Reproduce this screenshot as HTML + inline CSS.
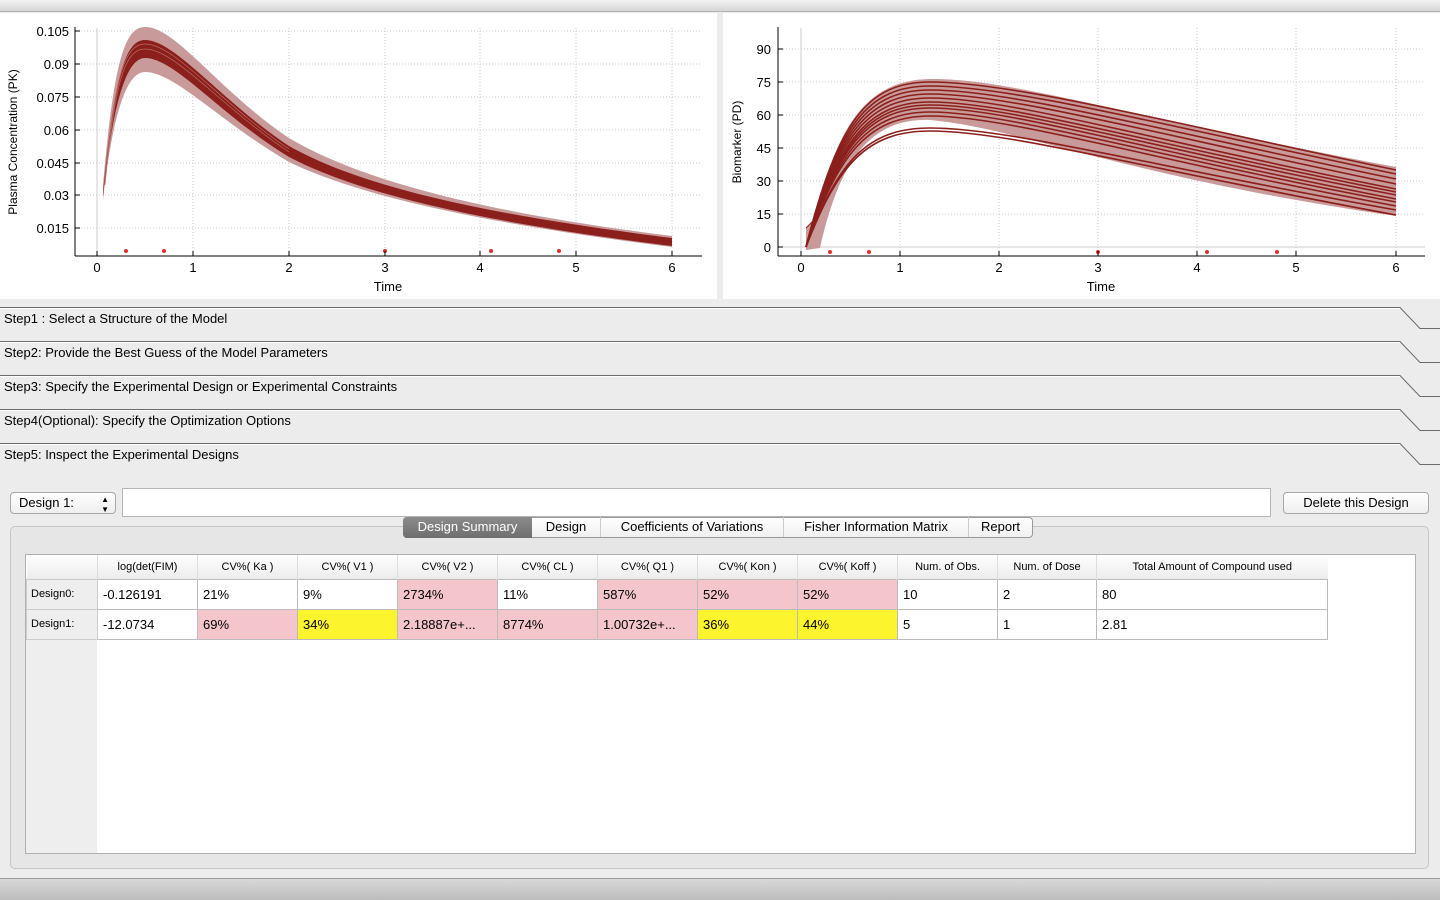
<!DOCTYPE html>
<html><head><meta charset="utf-8"><style>
*{margin:0;padding:0;box-sizing:border-box}
body{width:1440px;height:900px;overflow:hidden;background:#ececec;font-family:"Liberation Sans",sans-serif;position:relative;color:#000}
.a{position:absolute}
.step{position:absolute;left:4px;font-size:13px}
table{border-collapse:collapse;font-size:13px}
td{border:1px solid #bbb;height:30px;padding-left:5px;vertical-align:middle}
th{font-weight:normal;font-size:11px;height:24px;border-left:1px solid #ddd;background:linear-gradient(#fff,#ececec)}
.rh{background:#eee;font-size:11px;padding-left:4px;border-color:#ccc}
.p{background:#f4c6cc}.y{background:#fcf42c}
.tab{position:absolute;top:517px;height:20px;font-size:13px;line-height:20px;text-align:center;border-left:1px solid #ccc}
</style></head><body>
<div class="a" style="left:0;top:0;width:1440px;height:12px;background:linear-gradient(#f2f2f2,#d6d6d6);border-bottom:1px solid #b0b0b0"></div>
<div class="a" style="left:0;top:13px;width:717px;height:286px;background:#fff"></div>
<div class="a" style="left:723px;top:13px;width:717px;height:286px;background:#fff"></div>
<svg class="a" style="left:0;top:0" width="1440" height="300" font-family="Liberation Sans, sans-serif">
<g stroke="#c8c8c8" stroke-dasharray="1,2" stroke-width="1">
<line x1="78" x2="702" y1="31" y2="31"/><line x1="78" x2="702" y1="64" y2="64"/><line x1="78" x2="702" y1="97" y2="97"/><line x1="78" x2="702" y1="130" y2="130"/><line x1="78" x2="702" y1="163" y2="163"/><line x1="78" x2="702" y1="195" y2="195"/><line x1="78" x2="702" y1="228" y2="228"/>
<line x1="193" x2="193" y1="28" y2="256"/><line x1="289" x2="289" y1="28" y2="256"/><line x1="385" x2="385" y1="28" y2="256"/><line x1="480" x2="480" y1="28" y2="256"/><line x1="576" x2="576" y1="28" y2="256"/><line x1="672" x2="672" y1="28" y2="256"/>
<line x1="780" x2="1425" y1="49" y2="49"/><line x1="780" x2="1425" y1="82" y2="82"/><line x1="780" x2="1425" y1="115" y2="115"/><line x1="780" x2="1425" y1="148" y2="148"/><line x1="780" x2="1425" y1="181" y2="181"/><line x1="780" x2="1425" y1="214" y2="214"/>
<line x1="900" x2="900" y1="28" y2="256"/><line x1="999" x2="999" y1="28" y2="256"/><line x1="1098" x2="1098" y1="28" y2="256"/><line x1="1197" x2="1197" y1="28" y2="256"/><line x1="1296" x2="1296" y1="28" y2="256"/><line x1="1396" x2="1396" y1="28" y2="256"/>
</g>
<line x1="97" x2="97" y1="28" y2="256" stroke="#ccc"/>
<line x1="801" x2="801" y1="28" y2="256" stroke="#ccc"/>
<line x1="780" x2="1425" y1="247" y2="247" stroke="#ccc"/>
<!-- PK -->
<path d="M103,185 C114,60 125,27 145,27 C175,26 220,92 289,138 C360,180 480,212 672,236 L672,247 C480,223 360,196 289,162 C220,122 175,72 145,72 C125,72 112,120 103,200 Z" fill="#c99a9a"/>
<path d="M103,193 C114,78 125,40 145,40 C175,40 220,100 289,146 C360,186 480,214 672,238 L672,246 C480,222 360,194 289,157 C220,115 175,58 145,58 C125,58 112,110 103,197 Z" fill="#8b1f1b"/>
<g stroke="#b86a66" stroke-width="0.7" fill="none"><path d="M105,180 C115,75 125,44 145,44 C175,44 220,103 289,149"/><path d="M105,185 C115,80 125,49 145,49 C175,49 220,106 289,152"/></g>
<!-- PD -->
<path d="M806,228 L815,219 C838,120 870,80 930,79 C1010,78 1120,115 1396,167 L1396,216 C1130,178 1020,128 930,120 C870,118 840,160 820,248 L806,250 Z" fill="#c99a9a"/>
<g stroke="#8b1f1b" stroke-width="1.6" fill="none">
<path d="M806,247 C838,120 868,82 930,82 C1010,82 1150,118 1396,170"/>
<path d="M806,247 C838,124 868,86 930,86 C1010,86 1150,122 1396,174"/>
<path d="M806,247 C838,128 868,90 930,90 C1010,90 1150,128 1396,179"/>
<path d="M806,247 C838,132 868,94 930,94 C1010,94 1150,133 1396,184"/>
<path d="M806,247 C838,136 868,98 930,98 C1010,98 1150,140 1396,189"/>
<path d="M806,247 C838,140 868,102 930,102 C1010,102 1150,144 1396,192"/>
<path d="M806,247 C838,143 868,105 930,105 C1010,105 1150,148 1396,195"/>
<path d="M806,247 C838,146 868,108 930,108 C1010,108 1150,152 1396,199"/>
<path d="M806,247 C838,150 868,112 930,112 C1010,112 1150,156 1396,202"/>
<path d="M806,247 C838,154 868,116 930,116 C1010,116 1150,160 1396,206"/>
<path d="M806,247 C838,160 868,128 930,128 C1010,128 1150,166 1396,210"/>
<path d="M806,247 C838,163 868,131 930,131 C1010,131 1150,170 1396,215"/>
</g>
<path d="M815,219 L806,228" stroke="#8b1f1b"/>
<!-- dots -->
<g fill="#e0302a"><circle cx="126" cy="251" r="2"/><circle cx="164" cy="251" r="2"/><circle cx="385" cy="251" r="2"/><circle cx="491" cy="251" r="2"/><circle cx="559" cy="251" r="2"/>
<circle cx="830" cy="252" r="2"/><circle cx="869" cy="252" r="2"/><circle cx="1098" cy="252" r="2"/><circle cx="1207" cy="252" r="2"/><circle cx="1277" cy="252" r="2"/></g>
<!-- axes -->
<g stroke="#000" stroke-width="1">
<line x1="75" x2="75" y1="27" y2="256"/><line x1="75" x2="702" y1="256" y2="256"/>
<line x1="778" x2="778" y1="27" y2="256"/><line x1="778" x2="1425" y1="256" y2="256"/>
<path d="M75,31h5M75,64h5M75,97h5M75,130h5M75,163h5M75,195h5M75,228h5M97,256v-5M193,256v-5M289,256v-5M385,256v-5M480,256v-5M576,256v-5M672,256v-5"/>
<path d="M778,49h5M778,82h5M778,115h5M778,148h5M778,181h5M778,214h5M778,247h5M801,256v-5M900,256v-5M999,256v-5M1098,256v-5M1197,256v-5M1296,256v-5M1396,256v-5"/>
</g>
<g font-size="13" text-anchor="end">
<text x="69" y="36">0.105</text><text x="69" y="69">0.09</text><text x="69" y="102">0.075</text><text x="69" y="135">0.06</text><text x="69" y="168">0.045</text><text x="69" y="200">0.03</text><text x="69" y="233">0.015</text>
<text x="771" y="54">90</text><text x="771" y="87">75</text><text x="771" y="120">60</text><text x="771" y="153">45</text><text x="771" y="186">30</text><text x="771" y="219">15</text><text x="771" y="252">0</text>
</g>
<g font-size="13" text-anchor="middle">
<text x="97" y="272">0</text><text x="193" y="272">1</text><text x="289" y="272">2</text><text x="385" y="272">3</text><text x="480" y="272">4</text><text x="576" y="272">5</text><text x="672" y="272">6</text>
<text x="801" y="272">0</text><text x="900" y="272">1</text><text x="999" y="272">2</text><text x="1098" y="272">3</text><text x="1197" y="272">4</text><text x="1296" y="272">5</text><text x="1396" y="272">6</text>
<text x="388" y="291">Time</text><text x="1101" y="291">Time</text>
<text transform="translate(17,142) rotate(-90)" font-size="12">Plasma Concentration (PK)</text>
<text transform="translate(741,142) rotate(-90)" font-size="12">Biomarker (PD)</text>
</g>
</svg>
<svg class="a" style="left:0;top:300px" width="1440" height="170">
<g stroke="#6a6a6a" fill="none" stroke-width="1">
<path d="M0,7.5H1400L1420,28.5H1440"/><path d="M0,41.5H1400L1420,62.5H1440"/><path d="M0,75.5H1400L1420,96.5H1440"/><path d="M0,109.5H1400L1420,130.5H1440"/><path d="M0,143.5H1400L1420,164.5H1440"/>
</g>
<g stroke="#fff" fill="none" stroke-width="1">
<path d="M0,8.5H1400M0,42.5H1400M0,76.5H1400M0,110.5H1400M0,144.5H1400"/>
</g>
</svg>
<div class="step" style="top:311px">Step1 : Select a Structure of the Model</div>
<div class="step" style="top:345px">Step2: Provide the Best Guess of the Model Parameters</div>
<div class="step" style="top:379px">Step3: Specify the Experimental Design or Experimental Constraints</div>
<div class="step" style="top:413px">Step4(Optional): Specify the Optimization Options</div>
<div class="step" style="top:447px">Step5: Inspect the Experimental Designs</div>

<div class="a" style="left:10px;top:492px;width:106px;height:22px;border:1px solid #a8a8a8;border-radius:4px;background:linear-gradient(#fff,#efefef);font-size:13px;line-height:20px;padding-left:8px">Design 1:<span style="position:absolute;right:6px;font-size:8px;line-height:10px;top:2px">▲<br>▼</span></div>
<div class="a" style="left:122px;top:488px;width:1149px;height:29px;border:1px solid #b5b5b5;background:#fff"></div>
<div class="a" style="left:1283px;top:492px;width:146px;height:22px;border:1px solid #a8a8a8;border-radius:4px;background:linear-gradient(#fff,#efefef);font-size:13px;line-height:20px;text-align:center">Delete this Design</div>

<div class="a" style="left:10px;top:526px;width:1419px;height:343px;border:1px solid #c6c6c6;border-radius:5px;background:#e6e6e6"></div>
<div class="a" style="left:403px;top:517px;width:630px;height:21px;border:1px solid #999;border-radius:4px;background:linear-gradient(#fff,#f0f0f0)"></div>
<div class="tab" style="left:403px;width:129px;background:linear-gradient(#8c8c8c,#6e6e6e);color:#fff;border:none;border-radius:4px 0 0 4px;top:517px;height:21px">Design Summary</div>
<div class="tab" style="left:532px;width:68px;border:none">Design</div>
<div class="tab" style="left:600px;width:183px">Coefficients of Variations</div>
<div class="tab" style="left:783px;width:185px">Fisher Information Matrix</div>
<div class="tab" style="left:968px;width:64px">Report</div>

<div class="a" style="left:25px;top:554px;width:1391px;height:300px;border:1px solid #b0b0b0;background:#fff"></div>
<div class="a" style="left:26px;top:578px;width:71px;height:275px;background:#eee"></div>
<table class="a" style="left:26px;top:555px">
<tr><th style="width:71px;border-left:none"></th><th style="width:100px">log(det(FIM)</th><th style="width:100px">CV%( Ka )</th><th style="width:100px">CV%( V1 )</th><th style="width:100px">CV%( V2 )</th><th style="width:100px">CV%( CL )</th><th style="width:100px">CV%( Q1 )</th><th style="width:100px">CV%( Kon )</th><th style="width:100px">CV%( Koff )</th><th style="width:100px">Num. of Obs.</th><th style="width:99px">Num. of Dose</th><th style="width:231px">Total Amount of Compound used</th></tr>
<tr><td class="rh">Design0:</td><td>-0.126191</td><td>21%</td><td>9%</td><td class="p">2734%</td><td>11%</td><td class="p">587%</td><td class="p">52%</td><td class="p">52%</td><td>10</td><td>2</td><td>80</td></tr>
<tr><td class="rh">Design1:</td><td>-12.0734</td><td class="p">69%</td><td class="y">34%</td><td class="p">2.18887e+...</td><td class="p">8774%</td><td class="p">1.00732e+...</td><td class="y">36%</td><td class="y">44%</td><td>5</td><td>1</td><td>2.81</td></tr>
</table>
<div class="a" style="left:0;top:878px;width:1440px;height:22px;background:linear-gradient(#d8d8d8,#bdbdbd);border-top:1px solid #999"></div>
</body></html>
